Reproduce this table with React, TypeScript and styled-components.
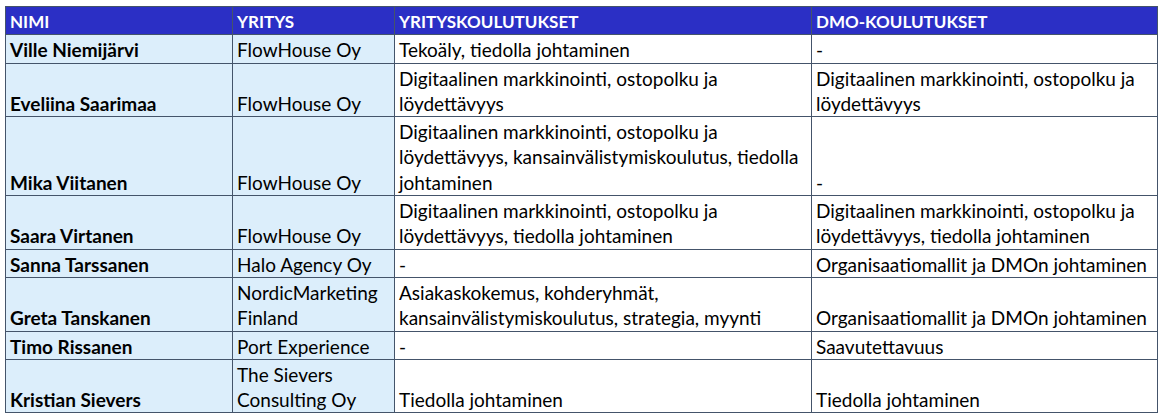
import React from "react";
import styled, { createGlobalStyle } from "styled-components";

const GlobalStyle = createGlobalStyle`
  html, body {
    margin: 0;
    background: #ffffff;
  }
  body {
    padding: 6px 0 0 5px;
    font-family: Lato, "Liberation Sans", sans-serif;
  }
`;

const Sheet = styled.table`
  border-collapse: collapse;
  table-layout: fixed;
  width: 1152px;
  font-size: 19px;
  color: #000000;
`;

const HeadCell = styled.th<{ $w: number }>`
  width: ${(p) => p.$w}px;
  box-sizing: border-box;
  background: #2b2fc5;
  color: #ffffff;
  font-size: 17px;
  font-weight: 700;
  text-align: left;
  vertical-align: bottom;
  line-height: 25.3px;
  padding: 2px 4px 0;
  border: 1px solid #44546a;
  white-space: nowrap;
`;

const Cell = styled.td<{ $shade?: boolean; $bold?: boolean }>`
  background: ${(p) => (p.$shade ? "#dceefb" : "#ffffff")};
  font-weight: ${(p) => (p.$bold ? 700 : 400)};
  vertical-align: bottom;
  line-height: 25.3px;
  padding: 2px 4px 0;
  border: 1px solid #44546a;
  overflow: hidden;
`;

const Line = styled.span`
  display: block;
  white-space: nowrap;
`;

type Row = {
  name: string;
  company: string[];
  business: string[];
  dmo: string[];
};

const columns = [
  { title: "NIMI", width: 227 },
  { title: "YRITYS", width: 162 },
  { title: "YRITYSKOULUTUKSET", width: 417 },
  { title: "DMO-KOULUTUKSET", width: 346 },
];

const rows: Row[] = [
  {
    name: "Ville Niemijärvi",
    company: ["FlowHouse Oy"],
    business: ["Tekoäly, tiedolla johtaminen"],
    dmo: ["-"],
  },
  {
    name: "Eveliina Saarimaa",
    company: ["FlowHouse Oy"],
    business: ["Digitaalinen markkinointi, ostopolku ja", "löydettävyys"],
    dmo: ["Digitaalinen markkinointi, ostopolku ja", "löydettävyys"],
  },
  {
    name: "Mika Viitanen",
    company: ["FlowHouse Oy"],
    business: [
      "Digitaalinen markkinointi, ostopolku ja",
      "löydettävyys, kansainvälistymiskoulutus, tiedolla",
      "johtaminen",
    ],
    dmo: ["-"],
  },
  {
    name: "Saara Virtanen",
    company: ["FlowHouse Oy"],
    business: ["Digitaalinen markkinointi, ostopolku ja", "löydettävyys, tiedolla johtaminen"],
    dmo: ["Digitaalinen markkinointi, ostopolku ja", "löydettävyys, tiedolla johtaminen"],
  },
  {
    name: "Sanna Tarssanen",
    company: ["Halo Agency Oy"],
    business: ["-"],
    dmo: ["Organisaatiomallit ja DMOn johtaminen"],
  },
  {
    name: "Greta Tanskanen",
    company: ["NordicMarketing", "Finland"],
    business: ["Asiakaskokemus, kohderyhmät,", "kansainvälistymiskoulutus, strategia, myynti"],
    dmo: ["Organisaatiomallit ja DMOn johtaminen"],
  },
  {
    name: "Timo Rissanen",
    company: ["Port Experience"],
    business: ["-"],
    dmo: ["Saavutettavuus"],
  },
  {
    name: "Kristian Sievers",
    company: ["The Sievers", "Consulting Oy"],
    business: ["Tiedolla johtaminen"],
    dmo: ["Tiedolla johtaminen"],
  },
];

const Lines: React.FC<{ lines: string[] }> = ({ lines }) => (
  <>
    {lines.map((text, i) => (
      <Line key={i}>{text}</Line>
    ))}
  </>
);

const App: React.FC = () => (
  <>
    <GlobalStyle />
    <Sheet>
      <thead>
        <tr>
          {columns.map((col) => (
            <HeadCell key={col.title} $w={col.width}>
              {col.title}
            </HeadCell>
          ))}
        </tr>
      </thead>
      <tbody>
        {rows.map((row) => (
          <tr key={row.name}>
            <Cell $shade $bold>
              {row.name}
            </Cell>
            <Cell $shade>
              <Lines lines={row.company} />
            </Cell>
            <Cell>
              <Lines lines={row.business} />
            </Cell>
            <Cell>
              <Lines lines={row.dmo} />
            </Cell>
          </tr>
        ))}
      </tbody>
    </Sheet>
  </>
);

export default App;
